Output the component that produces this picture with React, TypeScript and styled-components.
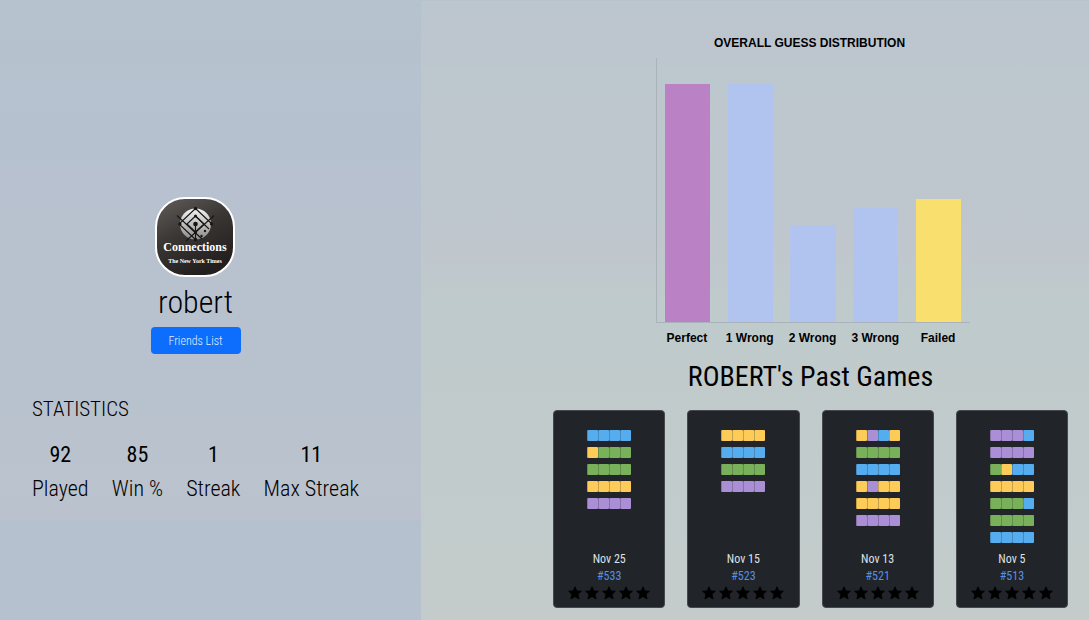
import React from "react";
import styled, { createGlobalStyle } from "styled-components";

const GlobalStyle = createGlobalStyle`
  *, *::before, *::after { box-sizing: border-box; }
  body {
    margin: 0;
    color: #000;
    background: #b6c2ce;
    font-family: "Roboto Condensed", Roboto, "Liberation Sans", sans-serif;
    font-weight: 300;
  }
  h1, h2, p, dl, dt, dd, figure { margin: 0; padding: 0; font-weight: inherit; }
`;

const Page = styled.div`
  display: grid;
  grid-template-columns: 29fr 46fr;
  min-height: 100vh;
`;

const Profile = styled.aside`
  display: flex;
  flex-direction: column;
  align-items: center;
  padding: 196px 62px 0 32px;
  background: linear-gradient(#b5c3ce 0, #b5c1cf 140px, #b8c1cf 180px, #b8c2ce 400px, #bac3cd 442px, #bbc2cd 519px, #b5c1ce 520px);
`;

const Avatar = styled.svg`
  display: block;
  width: 81px;
  height: 81px;
`;

const UserName = styled.h1`
  margin-top: 5px;
  font-size: 32px;
  line-height: 40px;
`;

const FriendsButton = styled.button`
  margin-top: 5px;
  height: 27px;
  padding: 0 18px;
  border: 0;
  border-radius: 4px;
  background: #0d6efd;
  color: #e3edfc;
  font-family: inherit;
  font-size: 12px;
  font-weight: 300;
  line-height: 16px;
`;

const Statistics = styled.section`
  align-self: stretch;
  margin-top: 41px;
`;

const StatisticsTitle = styled.h2`
  font-size: 21px;
  line-height: 29px;
`;

const StatList = styled.dl`
  display: flex;
  justify-content: space-between;
  margin-top: 14px;
`;

const Stat = styled.div`
  display: flex;
  flex-direction: column-reverse;
  text-align: center;
  font-size: 22px;
  line-height: 34px;
  white-space: nowrap;
`;

const StatValue = styled.dd`
  font-weight: 400;
`;

const History = styled.main`
  display: flex;
  flex-direction: column;
  align-items: center;
  margin-top: 1px;
  padding: 33px 21px 12px 132px;
  background: linear-gradient(#bbc6ce 0, #bec5ce 64px, #bcc8cd 66px, #bec6ce 140px, #bfc6cd 230px, #bfcacc 300px, #c4cccb 100%);
`;

const Chart = styled.figure`
  width: 320px;
  padding: 0 1px 0 5px;
  font-family: "Liberation Sans", Arial, sans-serif;
  font-size: 12px;
  font-weight: 700;
  line-height: 18px;
`;

const ChartTitle = styled.figcaption`
  margin-left: -6px;
  text-align: center;
`;

const Plot = styled.div`
  display: flex;
  height: 265px;
  margin-top: 6px;
  border-left: 1px solid #a9b3b9;
  border-bottom: 1px solid #a9b3b9;
`;

const BarSlot = styled.div`
  display: flex;
  flex: 1;
  align-items: flex-end;
  justify-content: center;
`;

const Bar = styled.div<{ $color: string }>`
  width: 72%;
  background: ${(p) => p.$color};
`;

const Labels = styled.div`
  display: flex;
  margin-top: 6px;
`;

const Label = styled.span`
  flex: 1;
  text-align: center;
  white-space: nowrap;
`;

const GamesTitle = styled.h2`
  margin-top: 12px;
  font-size: 28px;
  font-weight: 400;
  line-height: 36px;
`;

const Games = styled.div`
  display: grid;
  grid-template-columns: repeat(4, 1fr);
  gap: 22px;
  align-self: stretch;
  margin-top: 15px;
`;

const Card = styled.article`
  display: flex;
  flex-direction: column;
  align-items: center;
  min-height: 198px;
  padding: 19px 0 7px;
  border: 1px solid #45494d;
  border-radius: 4px;
  background: #212529;
  color: #dee2e6;
  font-size: 12px;
  font-weight: 400;
  line-height: 17px;
`;

const Guesses = styled.div`
  display: flex;
  flex: 1;
  flex-direction: column;
  gap: 6px;
`;

const Guess = styled.div`
  display: flex;
`;

const Tile = styled.span<{ $color: string }>`
  width: 11px;
  height: 11px;
  border-radius: 1px;
  background: ${(p) => p.$color};
  box-shadow: inset 1px 0 rgba(33, 37, 41, 0.25);
`;

const GameNumber = styled.p`
  color: #568fe4;
`;

const Stars = styled.div`
  display: flex;
  gap: 3px;
  margin-top: 1px;
`;

const StarIcon = styled.svg`
  display: block;
  width: 14px;
  height: 14px;
`;

const tileColors: Record<string, string> = {
  b: "#55acee",
  g: "#78b159",
  y: "#fdcb58",
  p: "#aa8ed6",
};

const stats = [
  { label: "Played", value: 92 },
  { label: "Win %", value: 85 },
  { label: "Streak", value: 1 },
  { label: "Max Streak", value: 11 },
];

const axisMax = 30;
const distribution = [
  { label: "Perfect", count: 27, color: "#ba81c5" },
  { label: "1 Wrong", count: 27, color: "#b0c4ef" },
  { label: "2 Wrong", count: 11, color: "#b0c4ef" },
  { label: "3 Wrong", count: 13, color: "#b0c4ef" },
  { label: "Failed", count: 14, color: "#f9df6d" },
];

const games = [
  { date: "Nov 25", number: 533, guesses: ["bbbb", "yggg", "gggg", "yyyy", "pppp"] },
  { date: "Nov 15", number: 523, guesses: ["yyyy", "bbbb", "gggg", "pppp"] },
  { date: "Nov 13", number: 521, guesses: ["ypby", "gggg", "bbbb", "ypyy", "yyyy", "pppp"] },
  { date: "Nov 5", number: 513, guesses: ["pppb", "pppp", "gybb", "yyyy", "gggb", "gggg", "bbbb"] },
];

function Logo() {
  return (
    <Avatar viewBox="0 0 81 81" role="img" aria-label="Connections">
      <defs>
        <linearGradient id="tile" x1="0" y1="0" x2="0.5" y2="1">
          <stop offset="0" stopColor="#625e5b" />
          <stop offset="0.5" stopColor="#3a3634" />
          <stop offset="1" stopColor="#231f1e" />
        </linearGradient>
        <linearGradient id="orb" x1="0" y1="0" x2="0" y2="1">
          <stop offset="0" stopColor="#f3f3f3" />
          <stop offset="1" stopColor="#8c8b8b" />
        </linearGradient>
      </defs>
      <rect x="1" y="2" width="78" height="78" rx="29" fill="url(#tile)" stroke="#fff" strokeWidth="2" />
      <circle cx="40.500" cy="28" r="15.500" fill="url(#orb)" />
      <g stroke="#171514" strokeWidth="1.100" fill="none">
        <path d="M40.500 12.500 24 28 40.500 43.500M40.500 12.500 57 28" />
        <path d="M40.500 20 32 28 40.500 36 49 28Z" />
        <path d="M22 19.500 47 43M59 19.500 31 45M40.500 28V44M40.500 20 54 33" />
      </g>
      <g fill="#171514">
        <circle cx="40.500" cy="28" r="2.300" />
        <circle cx="40.500" cy="12.500" r="1.700" />
        <circle cx="40.500" cy="43.500" r="1.700" />
        <circle cx="25" cy="28" r="1.600" />
        <circle cx="56.500" cy="28" r="1.600" />
        <circle cx="40.500" cy="20" r="1.500" />
        <circle cx="40.500" cy="36.500" r="1.500" />
        <circle cx="50" cy="35" r="1.200" />
        <circle cx="46.500" cy="40" r="1.200" />
      </g>
      <text x="40" y="55" textAnchor="middle" fill="#fff" fontFamily="Liberation Serif, serif" fontWeight="700" fontSize="12">
        Connections
      </text>
      <text x="40" y="67" textAnchor="middle" fill="#fff" fontFamily="Liberation Serif, serif" fontWeight="700" fontSize="6">
        The New York Times
      </text>
    </Avatar>
  );
}

function Star() {
  return (
    <StarIcon viewBox="0 0 14 14" aria-hidden="true">
      <path
        d="M7 .8 8.900 4.900 13.400 5.200 10.100 8.300 11.100 13 7 10.600 2.900 13 3.900 8.300 .6 5.200 5.100 4.900Z"
        fill="#000"
        stroke="#000"
        strokeWidth="0.800"
        strokeLinejoin="round"
      />
    </StarIcon>
  );
}

export default function App() {
  return (
    <>
      <GlobalStyle />
      <Page>
        <Profile>
          <Logo />
          <UserName>robert</UserName>
          <FriendsButton type="button">Friends List</FriendsButton>
          <Statistics>
            <StatisticsTitle>STATISTICS</StatisticsTitle>
            <StatList>
              {stats.map((s) => (
                <Stat key={s.label}>
                  <dt>{s.label}</dt>
                  <StatValue>{s.value}</StatValue>
                </Stat>
              ))}
            </StatList>
          </Statistics>
        </Profile>
        <History>
          <Chart>
            <ChartTitle>OVERALL GUESS DISTRIBUTION</ChartTitle>
            <Plot>
              {distribution.map((d) => (
                <BarSlot key={d.label}>
                  <Bar $color={d.color} style={{ height: `${(d.count / axisMax) * 100}%` }} />
                </BarSlot>
              ))}
            </Plot>
            <Labels>
              {distribution.map((d) => (
                <Label key={d.label}>{d.label}</Label>
              ))}
            </Labels>
          </Chart>
          <GamesTitle>ROBERT's Past Games</GamesTitle>
          <Games>
            {games.map((game) => (
              <Card key={game.number}>
                <Guesses>
                  {game.guesses.map((guess, row) => (
                    <Guess key={row}>
                      {guess.split("").map((c, i) => (
                        <Tile key={i} $color={tileColors[c]} />
                      ))}
                    </Guess>
                  ))}
                </Guesses>
                <p>{game.date}</p>
                <GameNumber>#{game.number}</GameNumber>
                <Stars role="img" aria-label="Rating">
                  {[1, 2, 3, 4, 5].map((n) => (
                    <Star key={n} />
                  ))}
                </Stars>
              </Card>
            ))}
          </Games>
        </History>
      </Page>
    </>
  );
}
